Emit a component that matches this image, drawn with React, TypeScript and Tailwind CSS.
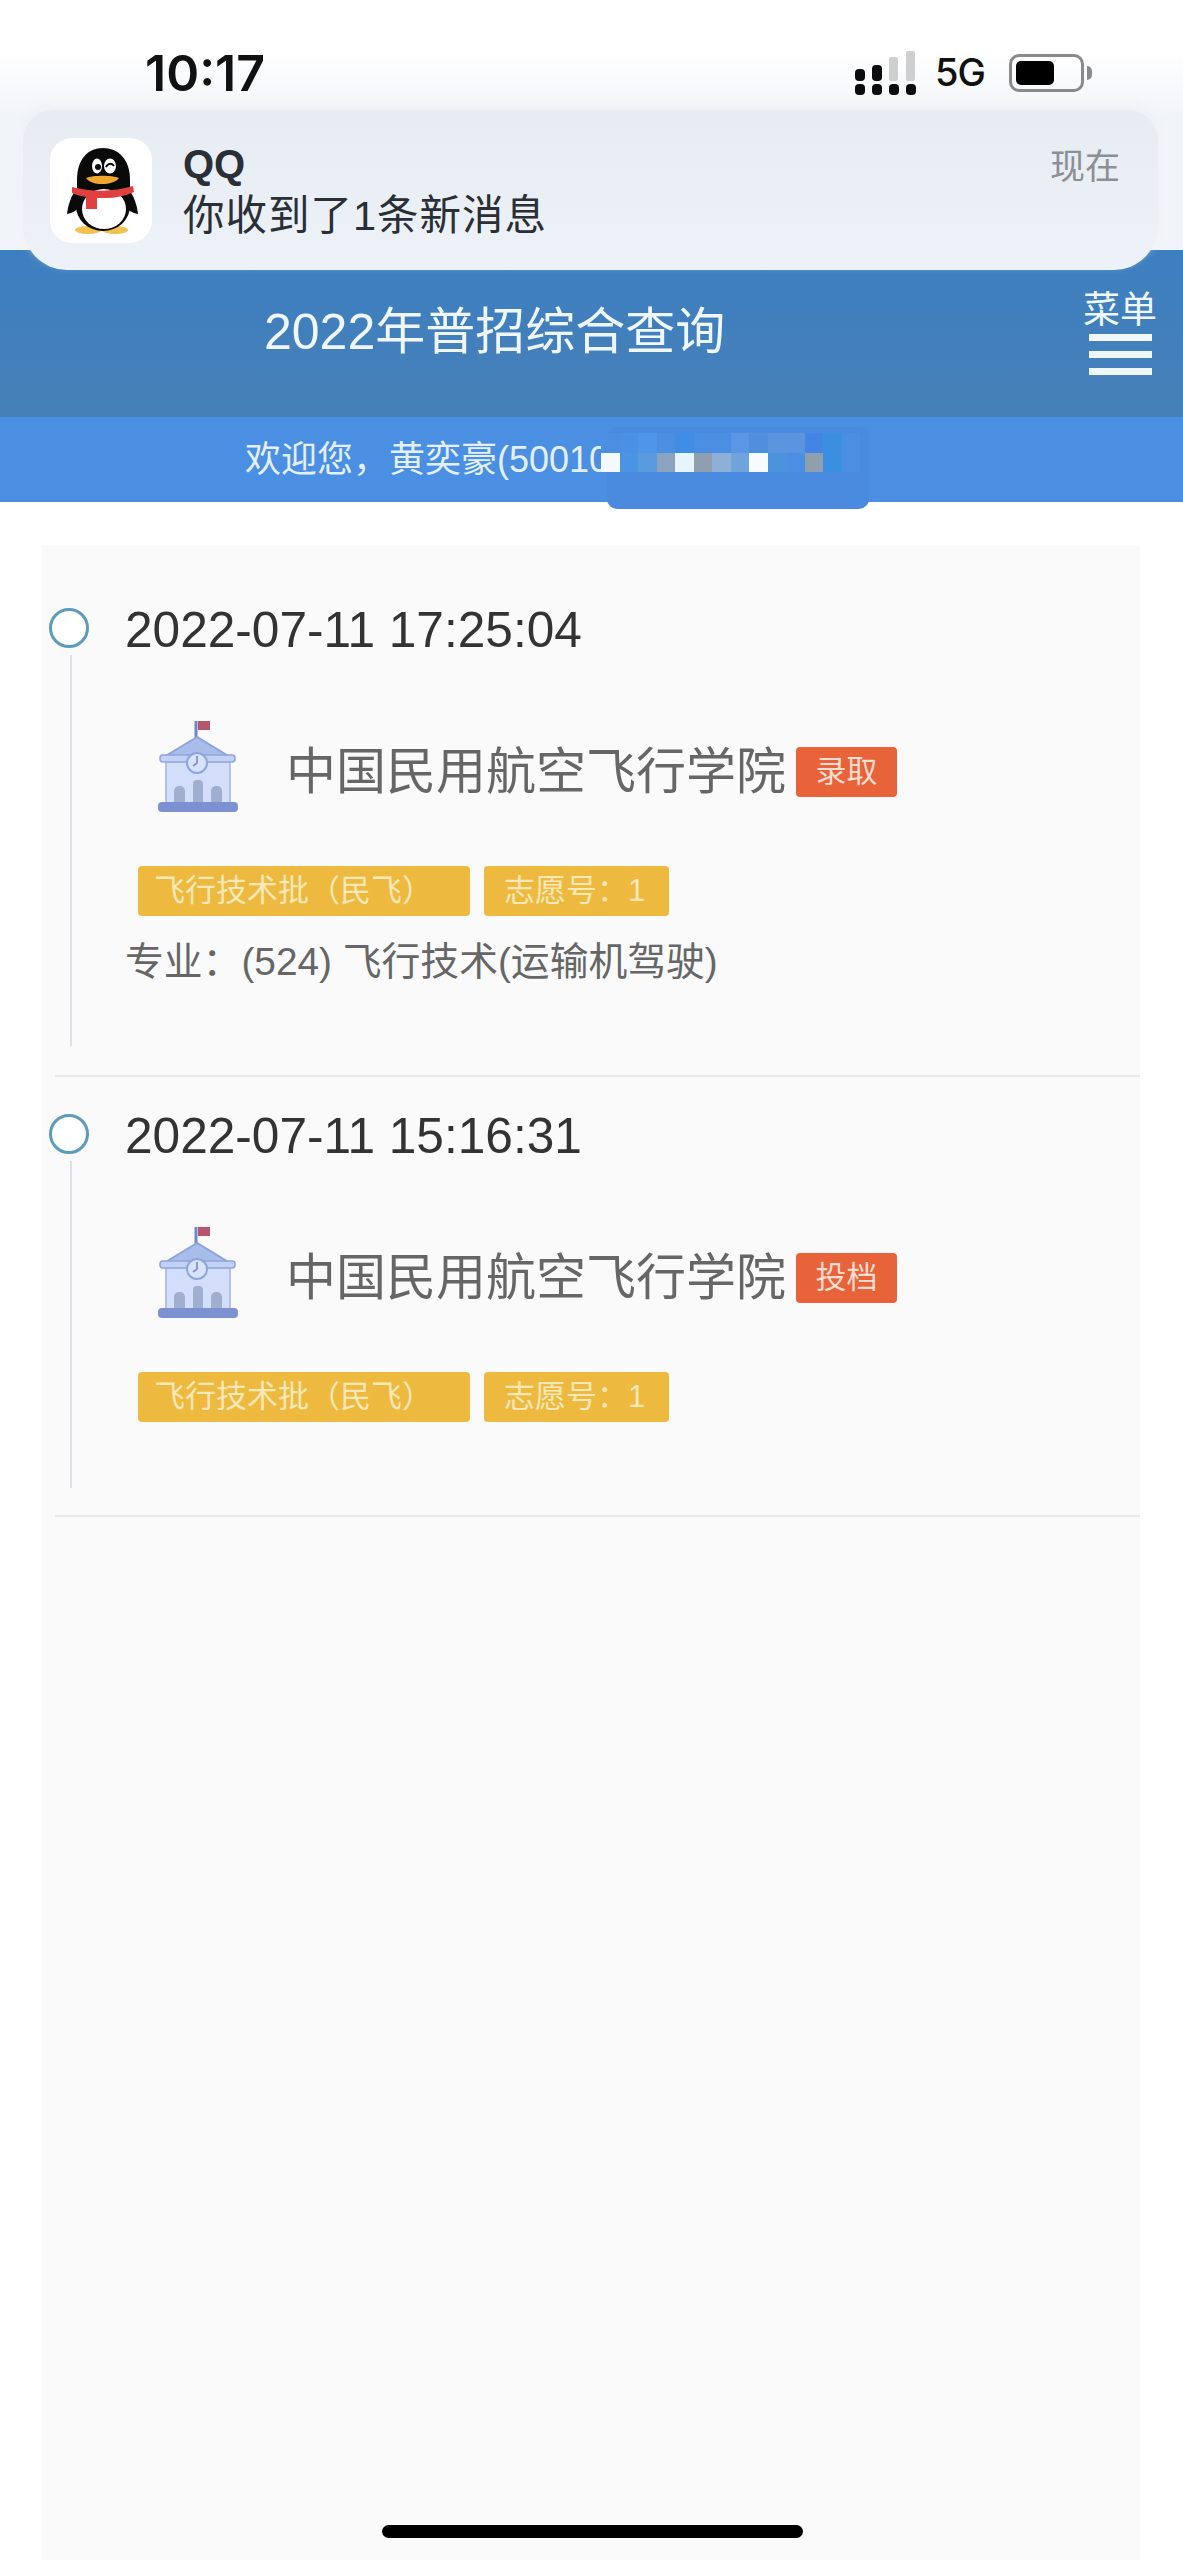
const mosaicTop = [
  'bg-[#4a8fe2]',
  'bg-[#4a91e6]',
  'bg-[#4f95ea]',
  'bg-[#4a8fe2]',
  'bg-[#3f8de4]',
  'bg-[#4a8fe2]',
  'bg-[#4a8fe2]',
  'bg-[#5b95e6]',
  'bg-[#4f8fdd]',
  'bg-[#5b95e0]',
  'bg-[#5b95e0]',
  'bg-[#4385e4]',
  'bg-[#3a8fe0]',
  'bg-[#4a8fe2]',
]
const mosaicBottom = [
  'bg-[#f4f9fd]',
  'bg-[#4a94e4]',
  'bg-[#5a9bdf]',
  'bg-[#8aa4c0]',
  'bg-[#e8f4fc]',
  'bg-[#8f9fb0]',
  'bg-[#8fb0d6]',
  'bg-[#6fa3dc]',
  'bg-[#f8fbfe]',
  'bg-[#4a94dc]',
  'bg-[#4a8fe2]',
  'bg-[#8f9fac]',
  'bg-[#3a8fe0]',
  'bg-[#4a8fe2]',
]

function QQLogo() {
  return (
    <svg viewBox="0 0 102 105" className="h-[105px] w-[102px]">
      <rect width="102" height="105" rx="22" fill="#ffffff" />
      <path d="M27 50C21 58 18 67 17 76c6-1 10-4 13-8z" fill="#0a0a0a" />
      <path d="M78 50c6 8 9 17 10 26-6-1-10-4-13-8z" fill="#0a0a0a" />
      <ellipse cx="38" cy="92" rx="13" ry="4" fill="#f2c14e" />
      <ellipse cx="65" cy="92" rx="13" ry="4" fill="#f2c14e" />
      <path d="M27 42C27 21 38 10 53 10s27 11 27 32v20H27z" fill="#0a0a0a" />
      <ellipse cx="53" cy="68" rx="27" ry="25" fill="#0a0a0a" />
      <ellipse cx="54" cy="71" rx="22" ry="20" fill="#ffffff" />
      <path d="M22 49c20 5 41 5 61-1l1 6c-9 4-19 6-28 6H47v11H36V59c-5-1-10-2-14-4z" fill="#e04040" />
      <ellipse cx="47" cy="28" rx="5" ry="7.5" fill="#ffffff" />
      <ellipse cx="60" cy="28" rx="6" ry="7.5" fill="#ffffff" />
      <circle cx="48" cy="29" r="3" fill="#0a0a0a" />
      <path d="M56 29c2-4 6-4 8-1" stroke="#0a0a0a" strokeWidth="2" fill="none" />
      <path d="M36 40c7-3 26-3 33 0-3 4-10 6-17 6s-13-2-16-6z" fill="#eea82f" />
    </svg>
  )
}

function SchoolIcon() {
  return (
    <svg viewBox="0 0 80 92" className="h-[92px] w-[80px]">
      <path d="M38 1v18" stroke="#6f86c8" strokeWidth="3" />
      <rect x="40" y="1" width="12" height="9" fill="#b5566c" />
      <path d="M8 38h64v46H8z" fill="#d3dffa" />
      <path d="M39 17 6 37h66z" fill="#a9bdea" stroke="#8ea4dc" strokeWidth="2" />
      <rect x="2" y="35" width="75" height="7" rx="3" fill="#c3d2f4" stroke="#8ea4dc" strokeWidth="1.5" />
      <circle cx="39" cy="43" r="10" fill="#d8e3fb" stroke="#8ea4dc" strokeWidth="2" />
      <path d="M39 36v7l-4 3" stroke="#7f93ca" strokeWidth="1.8" fill="none" />
      <path d="M8 42v40M72 42v40" stroke="#9fb2e2" strokeWidth="1.5" />
      <rect x="16" y="66" width="11" height="20" rx="5" fill="#a0aed0" />
      <rect x="35" y="60" width="10" height="26" rx="4" fill="#a0aed0" />
      <rect x="53" y="66" width="11" height="20" rx="5" fill="#a0aed0" />
      <rect x="0" y="82" width="80" height="10" rx="4" fill="#7b91d2" />
    </svg>
  )
}

function SignalIcon() {
  const dot = 'h-[11px] w-[10px] rounded-[4px] bg-[#0c0c0c]'
  return (
    <div className="grid grid-cols-4 items-end gap-x-[7px] gap-y-[3px]">
      <div className={`${dot} h-[12px]`} />
      <div className={`${dot} h-[16px]`} />
      <div className="h-[24px] w-[9px] rounded-[2px] bg-[#cfcfcf]" />
      <div className="h-[30px] w-[9px] rounded-[2px] bg-[#cfcfcf]" />
      <div className={dot} />
      <div className={dot} />
      <div className={dot} />
      <div className={dot} />
    </div>
  )
}

function TimelineItem({
  time,
  status,
  major,
  height,
  lineEnd,
}: {
  time: string
  status: string
  major?: string
  height: string
  lineEnd: string
}) {
  return (
    <div className={`border-b-2 border-[#e8e8e8] ml-[13px] ${height}`}>
      <div className="-ml-[6px] flex h-[40px] items-center">
        <div className="h-[40px] w-[40px] shrink-0 rounded-full border-[3px] border-[#5b9bbd] bg-white" />
        <span className="ml-[36px] pt-[5px] text-[49.6px] leading-none text-[#333333]">{time}</span>
      </div>
      <div className={`ml-[15px] mt-[7px] border-l-2 border-[#dde1e6] pl-[53px] pt-[92px] ${lineEnd}`}>
        <div className="flex h-[50px] items-center">
          <div className="ml-[33px] mr-[48px] -mt-[27px] self-start">
            <SchoolIcon />
          </div>
          <span className="text-[50px] leading-none text-[#666666]">中国民用航空飞行学院</span>
          <span className="ml-[10px] flex h-[50px] w-[101px] items-center justify-center rounded-[4px] bg-[#e8623a] text-[31px] text-[#f9ddd0]">
            {status}
          </span>
        </div>
        <div className="mt-[69px] flex gap-[14px] pl-[13px]">
          <span className="flex h-[50px] w-[332px] items-center rounded-[4px] bg-[#eeb93f] pl-[16px] text-[31px] text-[#f9e8b8]">
            飞行技术批（民飞）
          </span>
          <span className="flex h-[50px] w-[185px] items-center rounded-[4px] bg-[#eeb93f] pl-[20px] text-[31px] text-[#f9e8b8]">
            志愿号：1
          </span>
        </div>
        {major && (
          <p className="mt-[21px] text-[38.8px] leading-[50px] text-[#666666]">{major}</p>
        )}
      </div>
    </div>
  )
}

export default function App() {
  return (
    <div className="relative h-[2560px] w-[1183px] overflow-hidden bg-white font-['Liberation_Sans','Noto_Sans_CJK_SC',sans-serif]">
      {/* status bar */}
      <div className="h-[250px] bg-gradient-to-b from-white from-[50px] to-[#f1f4f8] to-[120px]">
        <div className="flex items-center justify-between pl-[145px] pr-[91px] pt-[44px]">
          <span className="font-['Inter',sans-serif] text-[50px] font-semibold leading-[52px] text-[#111111]">
            10:17
          </span>
          <div className="flex items-center">
            <SignalIcon />
            <span className="ml-[19px] font-['Inter',sans-serif] text-[38px] font-medium tracking-[-1px] text-[#111111]">
              5G
            </span>
            <div className="ml-[24px] h-[38px] w-[75px] rounded-[10px] border-[3px] border-[#8a8a8a] p-[4px]">
              <div className="h-full w-[38px] rounded-[5px] bg-black" />
            </div>
            <div className="ml-[3px] h-[14px] w-[5px] rounded-r-full bg-[#8a8a8a]" />
          </div>
        </div>
      </div>

      {/* notification */}
      <div className="absolute left-[23px] top-[110px] flex h-[160px] w-[1135px] rounded-b-[44px] rounded-t-[30px] bg-gradient-to-b from-[#e7ecf3] to-[#edf2f8] shadow-[0_-6px_10px_#eef1f5]">
        <div className="ml-[27px] mt-[28px]">
          <QQLogo />
        </div>
        <div className="ml-[31px] mt-[30px]">
          <div className="text-[40px] font-bold leading-[48px] text-[#2a2e35]">QQ</div>
          <div className="mt-[3px] text-[41.5px] leading-[50px] tracking-[1px] text-[#2a2e35]">你收到了1条新消息</div>
        </div>
        <span className="ml-auto mr-[38px] mt-[34px] text-[35px] leading-[46px] text-[#8b8f96]">现在</span>
      </div>

      {/* header */}
      <div className="flex h-[167px] bg-gradient-to-b from-[#3c7fc0] to-[#4780b8] text-[#f0f7fb]">
        <h1 className="ml-[264px] mt-[54px] text-[50px] font-normal leading-[56px]">2022年普招综合查询</h1>
        <div className="ml-auto mr-[26px] mt-[41px] flex w-[74px] flex-col items-center">
          <span className="text-[37px] leading-[40px]">菜单</span>
          <div className="mt-[3px] h-[7px] w-[63px] bg-[#f0f7fb]" />
          <div className="mt-[10px] h-[7px] w-[63px] bg-[#f0f7fb]" />
          <div className="mt-[10px] h-[7px] w-[63px] bg-[#f0f7fb]" />
        </div>
      </div>

      {/* welcome bar */}
      <div className="relative flex h-[85px] items-center bg-[#4a8fe2] pl-[245px] text-[36px] text-[#e3eff9]">
        欢迎您，黄奕豪(50010
        <div className="absolute left-[607px] top-[10px] h-[82px] w-[262px] rounded-[10px] bg-[#4a8be0]">
          <div className="ml-[-6px] mt-[6px] flex">
            {mosaicTop.map((c, i) => (
              <div key={i} className={`h-[20px] w-[18.5px] ${c}`} />
            ))}
          </div>
          <div className="ml-[-6px] flex">
            {mosaicBottom.map((c, i) => (
              <div key={i} className={`h-[19px] w-[18.5px] ${c}`} />
            ))}
          </div>
        </div>
      </div>

      {/* record list */}
      <div className="ml-[42px] mt-[43px] h-[2015px] w-[1098px] bg-[#fafafa] pt-[63px]">
        <TimelineItem
          time="2022-07-11 17:25:04"
          status="录取"
          major="专业：(524) 飞行技术(运输机驾驶)"
          height="h-[469px]"
          lineEnd="pb-[59px]"
        />
        <div className="h-[37px]" />
        <TimelineItem time="2022-07-11 15:16:31" status="投档" height="h-[403px]" lineEnd="pb-[66px]" />
      </div>

      {/* home indicator */}
      <div className="absolute bottom-[22px] left-[382px] h-[13px] w-[421px] rounded-full bg-black" />
    </div>
  )
}
